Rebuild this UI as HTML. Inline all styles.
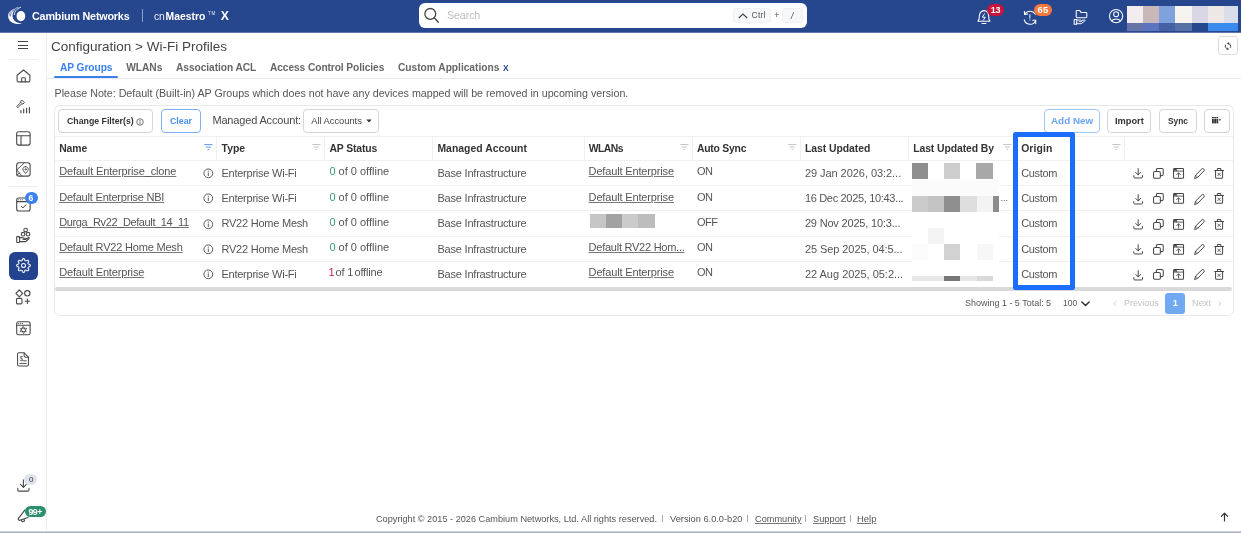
<!DOCTYPE html>
<html>
<head>
<meta charset="utf-8">
<title>cnMaestro X</title>
<style>
*{box-sizing:border-box;margin:0;padding:0}
html,body{width:1241px;height:533px;overflow:hidden;background:#fff}
body{font-family:"Liberation Sans",sans-serif;color:#4a4a4a;position:relative;font-size:11px}
.a{position:absolute}
.t{position:absolute;white-space:nowrap}
svg{position:absolute;overflow:visible}
.btn{position:absolute;border:1px solid #d6d6d6;border-radius:4px;background:#fff}
.vl{position:absolute;width:1px;background:#ececec}
.hl{position:absolute;height:1px;background:#ececec}
u{text-decoration:underline;text-underline-offset:1.2px;text-decoration-thickness:.8px;text-decoration-color:#777}
#txt{position:absolute;left:0;top:0;width:1241px;height:533px;will-change:transform}

</style>
</head>
<body>

<div class="a" style="left:0;top:0;width:1241px;height:32px;background:#26468d"></div>
<div class="a" style="left:0;top:32px;width:1241px;height:1px;background:#5f77ab"></div>
<svg style="left:7px;top:6px" width="20" height="20" viewBox="0 0 20 20">
<ellipse cx="13.900" cy="10.100" rx="4.400" ry="5.100" fill="#fff"/>
<path d="M12.300 1.100C5 2.500 1 6 1.100 10c.1 4.500 4.400 8.300 9.900 8 1.500-.1 2.900-.5 3.900-1.100-1.900.3-4.400.1-6.400-1.400C6 13.700 5.200 11 5.600 8.200 6 5.200 8.400 2.600 12.300 1.100Z" fill="#fff"/>
<path d="M10.300 1.900C5.800 3.600 3.300 6.800 3.500 10.400" stroke="#26468d" stroke-width=".7" fill="none"/>
<path d="M8.300 2.100C4 4 2 7 2.200 10.300" stroke="#26468d" stroke-width=".5" fill="none"/>
<path d="M13.900 1.200C9.600 2.600 7.300 5.600 7.400 9" stroke="#fff" stroke-width=".9" fill="none"/>
</svg>
<div class="a" style="left:141.5px;top:9px;width:1.2px;height:13px;background:#8d9fc6"></div>
<div class="a" style="left:419px;top:3px;width:388px;height:25px;background:#fff;border-radius:6px"></div>
<svg style="left:423px;top:7px" width="17" height="17" viewBox="0 0 17 17" fill="none" stroke="#444" stroke-width="1.3" stroke-linecap="round"><circle cx="7.3" cy="6.9" r="5.4"/><path d="M11.300 10.800 15.300 15.300"/></svg>
<div class="a" style="left:733px;top:8px;width:38px;height:15px;background:#f7f8fc;border:1px solid #f0f1f6;border-radius:3px"></div>
<svg style="left:738px;top:13px" width="10" height="6" viewBox="0 0 10 6" fill="none" stroke="#444" stroke-width="1.1"><path d="M.8 5 5 1 9.200 5"/></svg>
<div class="a" style="left:782px;top:8px;width:21px;height:15px;background:#f7f8fc;border:1px solid #f0f1f6;border-radius:3px"></div>
<svg style="left:976px;top:9px" width="16" height="17" viewBox="0 0 16 17" fill="none" stroke="#fff" stroke-width="1.05" stroke-linecap="round" stroke-linejoin="round">
<path d="M2 12.200C3.100 11.100 3.300 9.800 3.300 7.600 3.300 4.300 5 1.600 8 1.600S12.700 4.300 12.700 7.600c0 2.200.2 3.500 1.300 4.600Z"/>
<path d="M6 14.400h4"/>
<path d="M8.600 4.700 6.300 8.200h3L7.300 11.200" stroke-width=".95"/>
</svg>
<div class="a" style="left:987px;top:4px;width:17px;height:12px;border-radius:6px;background:#c8133d"></div>
<svg style="left:1023px;top:9px" width="15" height="17" viewBox="0 0 15 17" fill="none" stroke="#fff" stroke-width="1.050" stroke-linecap="round" stroke-linejoin="round">
<path d="M1.700 5.500A6 6 0 0 1 12.200 5.300"/><path d="M1.300 2.300 1.700 5.500 4.700 5.100"/>
<path d="M1.200 10.700A6 6 0 0 0 12.700 11.300"/><path d="M9.700 11.300h3v3.300"/>
<path d="M6.900 5.700v3.500M6.900 10.900v.2" stroke-width="1"/>
</svg>
<div class="a" style="left:1034px;top:4px;width:18px;height:12px;border-radius:6px;background:#f5773c"></div>
<svg style="left:1073px;top:9px" width="15" height="17" viewBox="0 0 15 17" fill="none" stroke="#fff" stroke-width="1.050" stroke-linecap="round" stroke-linejoin="round">
<path d="M3.200 2.300c0-.5.400-.9.900-.9h2.500l1.400 2h4.900c.5 0 .9.400.9.900v3.500c0 .5-.4.900-.9.900H4.100c-.5 0-.9-.4-.9-.9Z"/>
<path d="M1.200 10.500h2.500v4.700H1.200z"/>
<path d="M3.700 11h3.200c.7 0 1 .3 1.500.600l2.900-.700c.8-.2 1.100.8.400 1.200L8 14.700H3.700" stroke-width=".95"/>
<path d="M6.200 12.600h2.200" stroke-width=".9"/>
</svg>
<svg style="left:1108px;top:8px" width="16" height="16" viewBox="0 0 16 16" fill="none" stroke="#fff" stroke-width="1.050">
<circle cx="8.100" cy="8.100" r="6.600"/><circle cx="8.100" cy="6.200" r="2.500"/><path d="M3.600 12.900C4.500 11.700 6.100 11 8.100 11s3.600.7 4.500 1.900"/>
</svg>
<div class="a" style="left:1127px;top:6px;width:16px;height:17px;background:#f3edf0"></div>
<div class="a" style="left:1143px;top:6px;width:16px;height:17px;background:#c9b8ba"></div>
<div class="a" style="left:1159px;top:6px;width:16px;height:17px;background:#7fa2dd"></div>
<div class="a" style="left:1175px;top:6px;width:17px;height:17px;background:#f6f4ef"></div>
<div class="a" style="left:1192px;top:6px;width:16px;height:17px;background:#d9d6e6"></div>
<div class="a" style="left:1208px;top:6px;width:16px;height:17px;background:#eee8e4"></div>
<div class="a" style="left:1224px;top:6px;width:14px;height:17px;background:#d8deea"></div>
<div class="a" style="left:1127px;top:23px;width:16px;height:8px;background:#6673a7"></div>
<div class="a" style="left:1143px;top:23px;width:16px;height:8px;background:#5c74c0"></div>
<div class="a" style="left:1159px;top:23px;width:16px;height:8px;background:#4561a5"></div>
<div class="a" style="left:1175px;top:23px;width:17px;height:8px;background:#5670a5"></div>
<div class="a" style="left:1208px;top:23px;width:30px;height:8px;background:#3b8bec"></div>
<div class="a" style="left:46px;top:33px;width:1px;height:500px;background:#eeeeee"></div>
<div class="a" style="left:18px;top:41px;width:10px;height:1px;background:#444"></div>
<div class="a" style="left:18px;top:44.600px;width:10px;height:1px;background:#444"></div>
<div class="a" style="left:18px;top:48.400px;width:10px;height:1px;background:#444"></div>
<div class="a" style="left:9px;top:59px;width:29px;height:1px;background:#efefef"></div>
<svg style="left:16px;top:69px" width="15" height="14" viewBox="0 0 15 14" fill="none" stroke="#484848" stroke-width="1.1" stroke-linecap="round" stroke-linejoin="round">
<path d="M1.100 6.200 7.500 1l6.400 5.200v5.300c0 .8-.6 1.400-1.400 1.400H2.500c-.8 0-1.400-.6-1.400-1.400Z"/>
<path d="M5.700 12.800V9.600c0-.5.4-.9.900-.9h1.800c.5 0 .9.400.9.900v3.200"/></svg>
<svg style="left:16px;top:99px" width="15" height="15" viewBox="0 0 15 15" fill="none" stroke="#484848" stroke-width="1.1" stroke-linecap="round" stroke-linejoin="round">
<path d="M1 7.300 4.500 3.800 4.300 2.500 5.800 1 8.400 3.600 6.900 5.100 5.600 4.900 2.100 8.400Z" stroke-width="1"/>
<path d="M5 3.300 6.100 4.400" stroke-width=".9"/>
<path d="M4.900 11.600v2.200M7.700 10v3.800M10.600 9.200v4.600M13.400 8.600v5.200" stroke-width="1.150"/></svg>
<svg style="left:16px;top:131px" width="15" height="15" viewBox="0 0 15 15" fill="none" stroke="#484848" stroke-width="1.1" stroke-linecap="round" stroke-linejoin="round">
<rect x=".7" y=".7" width="13.400" height="13.400" rx="2"/><path d="M.7 4.800h13.400M5 4.800v9.300"/></svg>
<svg style="left:16px;top:162px" width="15" height="15" viewBox="0 0 15 15" fill="none" stroke="#484848" stroke-width="1.1" stroke-linecap="round" stroke-linejoin="round">
<rect x=".7" y=".7" width="13.400" height="13.400" rx="2.400"/>
<path d="M1 7.800 8.300.9M1.300 8.300l4.500 5.600M1 12.800l2.600-1.700" stroke-width=".9"/>
<path d="M9.600 4.600c-1.500 0-2.700 1.100-2.700 2.600 0 1.800 2.700 4.100 2.700 4.100s2.700-2.300 2.700-4.100c0-1.500-1.200-2.600-2.700-2.600Z" fill="#fff" stroke-width=".95"/>
<circle cx="9.600" cy="7.300" r=".7" stroke-width=".8"/></svg>
<div class="a" style="left:9px;top:186px;width:29px;height:1px;background:#efefef"></div>
<svg style="left:16px;top:197px" width="15" height="15" viewBox="0 0 15 15" fill="none" stroke="#484848" stroke-width="1.1" stroke-linecap="round" stroke-linejoin="round">
<rect x=".7" y="1" width="13.400" height="13" rx="2"/><path d="M.7 4.600h13.400"/>
<path d="M2.600 2.800h.1M4.400 2.800h.1M6.200 2.800h.1" stroke-width="1"/>
<path d="M5.300 9.400 6.900 11 9.800 7.900" stroke-width="1"/></svg>
<div class="a" style="left:25px;top:191.500px;width:12.500px;height:12.500px;border-radius:50%;background:#3b82f0"></div>
<svg style="left:16px;top:227px" width="15" height="16" viewBox="0 0 15 16" fill="none" stroke="#484848" stroke-width="1.1" stroke-linecap="round" stroke-linejoin="round" stroke-width="1">
<circle cx="9.600" cy="3.100" r="1.800"/><circle cx="7.100" cy="7.200" r="1.800"/><circle cx="12" cy="7.200" r="1.800"/>
<rect x=".7" y="9.600" width="2.900" height="5.900" rx=".6"/>
<path d="M3.600 10.600h2.300c.9 0 1.400.3 2 .700h1.800c.8 0 .8 1.200 0 1.200H7.100M10 12.200l2.300-1.400c.8-.4 1.300.6.600 1.100L10 14.200c-.4.300-.8.400-1.300.4H3.600"/></svg>
<div class="a" style="left:9px;top:251.500px;width:28.500px;height:28.500px;border-radius:6px;background:#24438f"></div>
<svg style="left:16px;top:258px" width="15" height="15" viewBox="0 0 24 24" fill="none" stroke="#fff" stroke-width="1.700" stroke-linecap="round" stroke-linejoin="round">
<circle cx="12" cy="12" r="3.200"/>
<path d="M19.400 15a1.650 1.650 0 0 0 .33 1.820l.06.06a2 2 0 1 1-2.830 2.830l-.06-.06a1.650 1.650 0 0 0-1.820-.33 1.650 1.650 0 0 0-1 1.510V21a2 2 0 0 1-4 0v-.09A1.650 1.650 0 0 0 9 19.400a1.650 1.650 0 0 0-1.820.33l-.06.06a2 2 0 1 1-2.830-2.830l.06-.06a1.650 1.650 0 0 0 .33-1.820 1.650 1.650 0 0 0-1.510-1H3a2 2 0 0 1 0-4h.09A1.650 1.650 0 0 0 4.600 9a1.650 1.650 0 0 0-.33-1.820l-.06-.06a2 2 0 1 1 2.830-2.830l.06.06a1.650 1.650 0 0 0 1.820.33H9a1.650 1.650 0 0 0 1-1.510V3a2 2 0 0 1 4 0v.09a1.650 1.650 0 0 0 1 1.510 1.650 1.650 0 0 0 1.820-.33l.06-.06a2 2 0 1 1 2.830 2.830l-.06.06a1.650 1.650 0 0 0-.33 1.820V9a1.650 1.650 0 0 0 1.510 1H21a2 2 0 0 1 0 4h-.09a1.650 1.650 0 0 0-1.510 1z"/></svg>
<svg style="left:15px;top:289px" width="16" height="16" viewBox="0 0 16 16" fill="none" stroke="#484848" stroke-width="1.1" stroke-linecap="round" stroke-linejoin="round" stroke-width="1">
<path d="M4.300 1 7.700 4.400 4.300 7.800.9 4.400Z"/><circle cx="12.300" cy="4.300" r="2.700"/>
<rect x="1.500" y="9.400" width="5.500" height="5.500" rx="1.200"/>
<path d="M12.400 10v4.400M10.200 12.200h4.400" stroke-width="1.100"/></svg>
<svg style="left:16px;top:321px" width="15" height="15" viewBox="0 0 15 15" fill="none" stroke="#484848" stroke-width="1.1" stroke-linecap="round" stroke-linejoin="round">
<rect x=".7" y=".8" width="13.400" height="13" rx="1.800"/><path d="M.7 4.200h13.400"/>
<path d="M2.600 2.500h.1M4.500 2.500h.1M6.400 2.500h.1" stroke-width="1.100"/>
<path d="M7.400 5.600 10.300 10.600H4.500ZM7.400 12.300 4.500 7.300h5.800Z" stroke-width=".8"/></svg>
<svg style="left:16.400px;top:351.800px" width="14.200" height="15" viewBox="0 0 15 16" fill="none" stroke="#484848" stroke-width="1.1" stroke-linecap="round" stroke-linejoin="round">
<path d="M8.600.9H3c-.8 0-1.400.6-1.400 1.400v11.200c0 .8.600 1.400 1.400 1.400h8.800c.8 0 1.400-.6 1.400-1.400V5.500Z"/>
<path d="M8.600.9v3.200c0 .8.600 1.400 1.400 1.400h3.200"/>
<path d="M7.900 9.400h3M4 12.200h6.900" stroke-width="1"/></svg>
<svg style="left:17px;top:479px" width="13" height="13" viewBox="0 0 13 13" fill="none" stroke="#484848" stroke-width="1.1" stroke-linecap="round" stroke-linejoin="round">
<path d="M6.400.700v7.400M3.500 5.400l2.900 2.900 2.900-2.900M.8 9.400v1.500c0 .7.500 1.200 1.200 1.200h8.800c.7 0 1.200-.5 1.200-1.200V9.400"/></svg>
<div class="a" style="left:24.400px;top:474px;width:13.100px;height:10.800px;border-radius:5.400px;background:#dfe4ec"></div>
<svg style="left:17px;top:509px" width="14" height="15" viewBox="0 0 14 15" fill="none" stroke="#484848" stroke-width="1.1" stroke-linecap="round" stroke-linejoin="round" stroke-width=".9">
<path d="M8 .900 1 9.900l1.300 1.500L11 8.600"/><path d="M4.300 10.900l.9 1.900 2.400-.9-.6-1.700"/></svg>
<div class="a" style="left:24.600px;top:506px;width:21.500px;height:11px;border-radius:5.500px;background:#2b8f6b"></div>
<div class="a" style="left:0;top:531px;width:1241px;height:1px;background:#cfd4db"></div>
<div class="a" style="left:0;top:532px;width:1241px;height:1px;background:#aab2bd"></div>
<div class="btn" style="left:1218px;top:36px;width:20px;height:19px;border-color:#dcdcdc;border-radius:3px"></div>
<svg style="left:1223.600px;top:41.800px" width="8" height="8.400" viewBox="0 0 10 10.500" fill="none" stroke="#333" stroke-width="1.150" stroke-linecap="round" stroke-linejoin="round">
<path d="M5.400 1.750A3.500 3.500 0 0 1 8.200 6.700M4.600 8.750A3.500 3.500 0 0 1 1.800 3.800"/><path d="M5.700.5 4.100 1.750 5.700 3ZM4.300 7.500 5.900 8.750 4.300 10Z" fill="#333" stroke-width=".4"/></svg>
<div class="a" style="left:47px;top:78px;width:1194px;height:1px;background:#e9e9e9"></div>
<div class="a" style="left:54px;top:76px;width:64px;height:2.200px;border-radius:1.500px;background:#3b82f0"></div>
<div class="a" style="left:54px;top:105px;width:1180px;height:211px;border:1px solid #e9e9e9;border-radius:6px"></div>
<div class="btn" style="left:58px;top:109px;width:95px;height:23.500px;border-color:#d6d6d6"></div>
<svg style="left:136.200px;top:118.200px" width="8.400" height="8.400" viewBox="0 0 9 9" fill="none" stroke="#444" stroke-width=".8"><circle cx="4.300" cy="4.300" r="3.500"/><path d="M4.300 3.900v2.300M4.300 2.500v.3" stroke-linecap="round"/></svg>
<div class="btn" style="left:161px;top:109px;width:39.500px;height:23.500px;border-color:#7fb0f6"></div>
<div class="btn" style="left:302.500px;top:109px;width:76px;height:23.500px;border-color:#d6d6d6"></div>
<svg style="left:365.500px;top:119px" width="6" height="4" viewBox="0 0 6 4"><path d="M.3.400h5.400L3 3.600Z" fill="#333"/></svg>
<div class="btn" style="left:1044px;top:109px;width:55.500px;height:23.500px;border-color:#a4c6f9"></div>
<div class="btn" style="left:1107px;top:109px;width:43.500px;height:23.500px;border-color:#d6d6d6"></div>
<div class="btn" style="left:1159px;top:109px;width:37.500px;height:23.500px;border-color:#d6d6d6"></div>
<div class="btn" style="left:1203.500px;top:109px;width:26px;height:23.500px;border-color:#d6d6d6"></div>
<svg style="left:1212px;top:117px" width="9.200" height="6.500" viewBox="0 0 9.200 6.500" fill="#333"><rect x="0" y="0" width="1.800" height="1.300"/><rect x="2.200" y="0" width="1.800" height="1.300"/><rect x="4.400" y="0" width="1.800" height="1.300"/>
<rect x="0" y="1.900" width="1.800" height="4.500"/><rect x="2.200" y="1.900" width="1.800" height="4.500"/><rect x="4.400" y="1.900" width="1.800" height="4.500"/><path d="M6.700 2.300h2.500L7.950 4.100Z"/></svg>
<div class="hl" style="left:55px;top:136px;width:1178px;background:#f0f0f0"></div>
<div class="hl" style="left:55px;top:160px;width:1178px;background:#f0f0f0"></div>
<div class="hl" style="left:55px;top:185px;width:1178px;background:#f0f0f0"></div>
<div class="hl" style="left:55px;top:210px;width:1178px;background:#f0f0f0"></div>
<div class="hl" style="left:55px;top:236px;width:1178px;background:#f0f0f0"></div>
<div class="hl" style="left:55px;top:261px;width:1178px;background:#f0f0f0"></div>
<div class="vl" style="left:216px;top:137px;height:23px;background:#f0f0f0"></div>
<div class="vl" style="left:324px;top:137px;height:23px;background:#f0f0f0"></div>
<div class="vl" style="left:432px;top:137px;height:23px;background:#f0f0f0"></div>
<div class="vl" style="left:584px;top:137px;height:23px;background:#f0f0f0"></div>
<div class="vl" style="left:692px;top:137px;height:23px;background:#f0f0f0"></div>
<div class="vl" style="left:800px;top:137px;height:23px;background:#f0f0f0"></div>
<div class="vl" style="left:908px;top:137px;height:23px;background:#f0f0f0"></div>
<div class="vl" style="left:1016px;top:137px;height:23px;background:#f0f0f0"></div>
<div class="vl" style="left:1124px;top:137px;height:23px;background:#f0f0f0"></div>
<svg style="left:203.5px;top:144px" width="9" height="6" viewBox="0 0 9 6" stroke="#5b9af5" stroke-width="1" fill="none"><path d="M.2.600h8.300M1.900 3.100h4.900M3.500 5.400h1.700"/></svg>
<svg style="left:312px;top:144px" width="9" height="6" viewBox="0 0 9 6" stroke="#c4c4c4" stroke-width="1" fill="none"><path d="M.2.600h8.300M1.900 3.100h4.900M3.500 5.400h1.700"/></svg>
<svg style="left:679.5px;top:144px" width="9" height="6" viewBox="0 0 9 6" stroke="#c4c4c4" stroke-width="1" fill="none"><path d="M.2.600h8.300M1.900 3.100h4.900M3.500 5.400h1.700"/></svg>
<svg style="left:787.5px;top:144px" width="9" height="6" viewBox="0 0 9 6" stroke="#c4c4c4" stroke-width="1" fill="none"><path d="M.2.600h8.300M1.900 3.100h4.900M3.500 5.400h1.700"/></svg>
<svg style="left:1003.3px;top:144px" width="9" height="6" viewBox="0 0 9 6" stroke="#c4c4c4" stroke-width="1" fill="none"><path d="M.2.600h8.300M1.900 3.100h4.900M3.500 5.400h1.700"/></svg>
<svg style="left:1111.8px;top:144px" width="9" height="6" viewBox="0 0 9 6" stroke="#c4c4c4" stroke-width="1" fill="none"><path d="M.2.600h8.300M1.900 3.100h4.900M3.500 5.400h1.700"/></svg>
<svg style="left:202.700px;top:167.9px" width="11" height="11" viewBox="0 0 11 11" fill="none" stroke="#4a4a4a" stroke-width=".9"><circle cx="5.300" cy="5.300" r="4.400"/><path d="M5.300 4.900v2.700M5.300 3v.3" stroke-linecap="round"/></svg>
<svg style="left:1133.400px;top:168.3px" width="10.900" height="10.900" viewBox="0 0 12 12" fill="none" stroke="#444" stroke-width="1.080" stroke-linecap="round" stroke-linejoin="round"><path d="M5.700.700v6.800M3 4.900l2.700 2.700 2.700-2.700M.9 8.400v1.500c0 .6.500 1.100 1.100 1.100h7.400c.6 0 1.100-.5 1.100-1.100V8.400"/></svg>
<svg style="left:1152.700px;top:168.1px" width="11.300" height="11.300" viewBox="0 0 12 12" fill="none" stroke="#444" stroke-width="1.080" stroke-linecap="round" stroke-linejoin="round"><rect x=".6" y="3.600" width="7.200" height="7.400" rx="1.500"/><path d="M3.600 3.400V2c0-.8.600-1.400 1.400-1.400h4.500c.8 0 1.400.6 1.400 1.400v4.700c0 .8-.6 1.400-1.400 1.400H8"/></svg>
<svg style="left:1172.700px;top:168.1px" width="11.300" height="11.300" viewBox="0 0 12 12" fill="none" stroke="#444" stroke-width="1.080" stroke-linecap="round" stroke-linejoin="round"><rect x=".6" y=".6" width="10.600" height="10.400" rx="1"/><path d="M.6 3.300h10.600M3.900.8v2.300" stroke-width=".9"/><path d="M5.900 9.600V5.300M3.900 7.100l2-2 2 2" stroke-width=".95"/><path d="M1.100 1.900h2.400" stroke-width="1.700" stroke-linecap="butt"/></svg>
<svg style="left:1193.500px;top:168.2px" width="11.100" height="11.100" viewBox="0 0 12 12" fill="none" stroke="#444" stroke-width="1.080" stroke-linecap="round" stroke-linejoin="round"><path d="M.8 11l.9-3.300L8.600.9c.5-.5 1.200-.5 1.700 0l.5.500c.5.500.5 1.200 0 1.700L4 10Z"/><path d="M1.700 7.700 4 10" stroke-width=".8"/></svg>
<svg style="left:1214.400px;top:168.0px" width="10.200" height="11.200" viewBox="0 0 11 12" fill="none" stroke="#444" stroke-width="1.080" stroke-linecap="round" stroke-linejoin="round"><path d="M.7 2.600h9.600M3.600 2.400V1.300c0-.4.300-.7.700-.7h2.400c.4 0 .7.300.7.700v1.100M1.700 2.800v7.200c0 .6.500 1.100 1.100 1.100h5.400c.6 0 1.100-.5 1.100-1.100V2.800"/><path d="M4.100 5.400l2.800 2.800M6.900 5.400 4.100 8.200" stroke-width=".9"/></svg>
<svg style="left:202.700px;top:193.2px" width="11" height="11" viewBox="0 0 11 11" fill="none" stroke="#4a4a4a" stroke-width=".9"><circle cx="5.300" cy="5.300" r="4.400"/><path d="M5.300 4.900v2.700M5.300 3v.3" stroke-linecap="round"/></svg>
<svg style="left:1133.400px;top:193.6px" width="10.900" height="10.900" viewBox="0 0 12 12" fill="none" stroke="#444" stroke-width="1.080" stroke-linecap="round" stroke-linejoin="round"><path d="M5.700.700v6.800M3 4.900l2.700 2.700 2.700-2.700M.9 8.400v1.500c0 .6.500 1.100 1.100 1.100h7.400c.6 0 1.100-.5 1.100-1.100V8.400"/></svg>
<svg style="left:1152.700px;top:193.4px" width="11.300" height="11.300" viewBox="0 0 12 12" fill="none" stroke="#444" stroke-width="1.080" stroke-linecap="round" stroke-linejoin="round"><rect x=".6" y="3.600" width="7.200" height="7.400" rx="1.500"/><path d="M3.600 3.400V2c0-.8.600-1.400 1.400-1.400h4.500c.8 0 1.400.6 1.400 1.400v4.700c0 .8-.6 1.400-1.400 1.400H8"/></svg>
<svg style="left:1172.700px;top:193.4px" width="11.300" height="11.300" viewBox="0 0 12 12" fill="none" stroke="#444" stroke-width="1.080" stroke-linecap="round" stroke-linejoin="round"><rect x=".6" y=".6" width="10.600" height="10.400" rx="1"/><path d="M.6 3.300h10.600M3.900.8v2.300" stroke-width=".9"/><path d="M5.900 9.600V5.300M3.900 7.100l2-2 2 2" stroke-width=".95"/><path d="M1.100 1.900h2.400" stroke-width="1.700" stroke-linecap="butt"/></svg>
<svg style="left:1193.500px;top:193.5px" width="11.100" height="11.100" viewBox="0 0 12 12" fill="none" stroke="#444" stroke-width="1.080" stroke-linecap="round" stroke-linejoin="round"><path d="M.8 11l.9-3.300L8.600.9c.5-.5 1.200-.5 1.700 0l.5.500c.5.500.5 1.200 0 1.700L4 10Z"/><path d="M1.700 7.700 4 10" stroke-width=".8"/></svg>
<svg style="left:1214.400px;top:193.3px" width="10.200" height="11.200" viewBox="0 0 11 12" fill="none" stroke="#444" stroke-width="1.080" stroke-linecap="round" stroke-linejoin="round"><path d="M.7 2.600h9.600M3.600 2.400V1.300c0-.4.300-.7.700-.7h2.400c.4 0 .7.300.7.700v1.100M1.700 2.800v7.200c0 .6.500 1.100 1.100 1.100h5.400c.6 0 1.100-.5 1.100-1.100V2.800"/><path d="M4.100 5.400l2.800 2.800M6.900 5.400 4.100 8.200" stroke-width=".9"/></svg>
<svg style="left:202.700px;top:218.5px" width="11" height="11" viewBox="0 0 11 11" fill="none" stroke="#4a4a4a" stroke-width=".9"><circle cx="5.300" cy="5.300" r="4.400"/><path d="M5.300 4.900v2.700M5.300 3v.3" stroke-linecap="round"/></svg>
<svg style="left:1133.400px;top:218.9px" width="10.900" height="10.900" viewBox="0 0 12 12" fill="none" stroke="#444" stroke-width="1.080" stroke-linecap="round" stroke-linejoin="round"><path d="M5.700.700v6.800M3 4.900l2.700 2.700 2.700-2.700M.9 8.400v1.500c0 .6.500 1.100 1.100 1.100h7.400c.6 0 1.100-.5 1.100-1.100V8.400"/></svg>
<svg style="left:1152.700px;top:218.7px" width="11.300" height="11.300" viewBox="0 0 12 12" fill="none" stroke="#444" stroke-width="1.080" stroke-linecap="round" stroke-linejoin="round"><rect x=".6" y="3.600" width="7.200" height="7.400" rx="1.500"/><path d="M3.600 3.400V2c0-.8.600-1.400 1.400-1.400h4.500c.8 0 1.400.6 1.400 1.400v4.700c0 .8-.6 1.400-1.400 1.400H8"/></svg>
<svg style="left:1172.700px;top:218.7px" width="11.300" height="11.300" viewBox="0 0 12 12" fill="none" stroke="#444" stroke-width="1.080" stroke-linecap="round" stroke-linejoin="round"><rect x=".6" y=".6" width="10.600" height="10.400" rx="1"/><path d="M.6 3.300h10.600M3.900.8v2.300" stroke-width=".9"/><path d="M5.900 9.600V5.300M3.900 7.100l2-2 2 2" stroke-width=".95"/><path d="M1.100 1.900h2.400" stroke-width="1.700" stroke-linecap="butt"/></svg>
<svg style="left:1193.500px;top:218.8px" width="11.100" height="11.100" viewBox="0 0 12 12" fill="none" stroke="#444" stroke-width="1.080" stroke-linecap="round" stroke-linejoin="round"><path d="M.8 11l.9-3.300L8.600.9c.5-.5 1.200-.5 1.700 0l.5.500c.5.500.5 1.200 0 1.700L4 10Z"/><path d="M1.700 7.700 4 10" stroke-width=".8"/></svg>
<svg style="left:1214.400px;top:218.6px" width="10.200" height="11.200" viewBox="0 0 11 12" fill="none" stroke="#444" stroke-width="1.080" stroke-linecap="round" stroke-linejoin="round"><path d="M.7 2.600h9.600M3.600 2.400V1.300c0-.4.300-.7.700-.7h2.400c.4 0 .7.300.7.700v1.100M1.700 2.800v7.200c0 .6.500 1.100 1.100 1.100h5.400c.6 0 1.100-.5 1.100-1.100V2.800"/><path d="M4.100 5.400l2.800 2.800M6.900 5.400 4.100 8.200" stroke-width=".9"/></svg>
<svg style="left:202.700px;top:243.8px" width="11" height="11" viewBox="0 0 11 11" fill="none" stroke="#4a4a4a" stroke-width=".9"><circle cx="5.300" cy="5.300" r="4.400"/><path d="M5.300 4.900v2.700M5.300 3v.3" stroke-linecap="round"/></svg>
<svg style="left:1133.400px;top:244.2px" width="10.900" height="10.900" viewBox="0 0 12 12" fill="none" stroke="#444" stroke-width="1.080" stroke-linecap="round" stroke-linejoin="round"><path d="M5.700.700v6.800M3 4.900l2.700 2.700 2.700-2.700M.9 8.400v1.500c0 .6.500 1.100 1.100 1.100h7.400c.6 0 1.100-.5 1.100-1.100V8.400"/></svg>
<svg style="left:1152.700px;top:244.0px" width="11.300" height="11.300" viewBox="0 0 12 12" fill="none" stroke="#444" stroke-width="1.080" stroke-linecap="round" stroke-linejoin="round"><rect x=".6" y="3.600" width="7.200" height="7.400" rx="1.500"/><path d="M3.600 3.400V2c0-.8.600-1.400 1.400-1.400h4.500c.8 0 1.400.6 1.400 1.400v4.700c0 .8-.6 1.400-1.400 1.400H8"/></svg>
<svg style="left:1172.700px;top:244.0px" width="11.300" height="11.300" viewBox="0 0 12 12" fill="none" stroke="#444" stroke-width="1.080" stroke-linecap="round" stroke-linejoin="round"><rect x=".6" y=".6" width="10.600" height="10.400" rx="1"/><path d="M.6 3.300h10.600M3.900.8v2.300" stroke-width=".9"/><path d="M5.900 9.600V5.300M3.900 7.100l2-2 2 2" stroke-width=".95"/><path d="M1.100 1.900h2.400" stroke-width="1.700" stroke-linecap="butt"/></svg>
<svg style="left:1193.500px;top:244.1px" width="11.100" height="11.100" viewBox="0 0 12 12" fill="none" stroke="#444" stroke-width="1.080" stroke-linecap="round" stroke-linejoin="round"><path d="M.8 11l.9-3.300L8.600.9c.5-.5 1.200-.5 1.700 0l.5.500c.5.500.5 1.200 0 1.700L4 10Z"/><path d="M1.700 7.700 4 10" stroke-width=".8"/></svg>
<svg style="left:1214.400px;top:243.9px" width="10.200" height="11.200" viewBox="0 0 11 12" fill="none" stroke="#444" stroke-width="1.080" stroke-linecap="round" stroke-linejoin="round"><path d="M.7 2.600h9.600M3.600 2.400V1.300c0-.4.300-.7.700-.7h2.400c.4 0 .7.300.7.700v1.100M1.700 2.800v7.200c0 .6.500 1.100 1.100 1.100h5.400c.6 0 1.100-.5 1.100-1.100V2.800"/><path d="M4.100 5.400l2.800 2.800M6.900 5.400 4.100 8.200" stroke-width=".9"/></svg>
<svg style="left:202.700px;top:269.1px" width="11" height="11" viewBox="0 0 11 11" fill="none" stroke="#4a4a4a" stroke-width=".9"><circle cx="5.300" cy="5.300" r="4.400"/><path d="M5.300 4.900v2.700M5.300 3v.3" stroke-linecap="round"/></svg>
<svg style="left:1133.400px;top:269.5px" width="10.900" height="10.900" viewBox="0 0 12 12" fill="none" stroke="#444" stroke-width="1.080" stroke-linecap="round" stroke-linejoin="round"><path d="M5.700.700v6.800M3 4.900l2.700 2.700 2.700-2.700M.9 8.400v1.500c0 .6.500 1.100 1.100 1.100h7.400c.6 0 1.100-.5 1.100-1.100V8.400"/></svg>
<svg style="left:1152.700px;top:269.3px" width="11.300" height="11.300" viewBox="0 0 12 12" fill="none" stroke="#444" stroke-width="1.080" stroke-linecap="round" stroke-linejoin="round"><rect x=".6" y="3.600" width="7.200" height="7.400" rx="1.500"/><path d="M3.600 3.400V2c0-.8.600-1.400 1.400-1.400h4.500c.8 0 1.400.6 1.400 1.400v4.700c0 .8-.6 1.400-1.400 1.400H8"/></svg>
<svg style="left:1172.700px;top:269.3px" width="11.300" height="11.300" viewBox="0 0 12 12" fill="none" stroke="#444" stroke-width="1.080" stroke-linecap="round" stroke-linejoin="round"><rect x=".6" y=".6" width="10.600" height="10.400" rx="1"/><path d="M.6 3.300h10.600M3.900.8v2.300" stroke-width=".9"/><path d="M5.900 9.600V5.300M3.900 7.100l2-2 2 2" stroke-width=".95"/><path d="M1.100 1.900h2.400" stroke-width="1.700" stroke-linecap="butt"/></svg>
<svg style="left:1193.500px;top:269.4px" width="11.100" height="11.100" viewBox="0 0 12 12" fill="none" stroke="#444" stroke-width="1.080" stroke-linecap="round" stroke-linejoin="round"><path d="M.8 11l.9-3.300L8.600.9c.5-.5 1.200-.5 1.700 0l.5.500c.5.500.5 1.200 0 1.700L4 10Z"/><path d="M1.700 7.700 4 10" stroke-width=".8"/></svg>
<svg style="left:1214.400px;top:269.2px" width="10.200" height="11.200" viewBox="0 0 11 12" fill="none" stroke="#444" stroke-width="1.080" stroke-linecap="round" stroke-linejoin="round"><path d="M.7 2.600h9.600M3.600 2.400V1.300c0-.4.300-.7.700-.7h2.400c.4 0 .7.300.7.700v1.100M1.700 2.800v7.200c0 .6.500 1.100 1.100 1.100h5.400c.6 0 1.100-.5 1.100-1.100V2.800"/><path d="M4.100 5.400l2.800 2.800M6.900 5.400 4.100 8.200" stroke-width=".9"/></svg>
<div class="a" style="left:590px;top:214px;width:16px;height:14px;background:#c6c6c6"></div>
<div class="a" style="left:606px;top:214px;width:16px;height:14px;background:#a2a2a2"></div>
<div class="a" style="left:622px;top:214px;width:16px;height:14px;background:#cbcbcb"></div>
<div class="a" style="left:638px;top:214px;width:17px;height:14px;background:#bdbdbd"></div>
<div class="a" style="left:912px;top:179.500px;width:87px;height:102px;background:#fff"></div>
<div class="a" style="left:912px;top:179.500px;width:87px;height:16px;background:#fbfbfb"></div>
<div class="a" style="left:912px;top:163.4px;width:16.0px;height:16.1px;background:#8f8f8f"></div>
<div class="a" style="left:944px;top:163.4px;width:16.2px;height:16.1px;background:#cdcdcd"></div>
<div class="a" style="left:976.4px;top:163.4px;width:16.3px;height:16.1px;background:#a8a8a8"></div>
<div class="a" style="left:912px;top:195.8px;width:16.0px;height:15.9px;background:#cbcbcb"></div>
<div class="a" style="left:928px;top:195.8px;width:16.0px;height:15.9px;background:#c4c4c4"></div>
<div class="a" style="left:944px;top:195.8px;width:16.3px;height:15.9px;background:#8f8f8f"></div>
<div class="a" style="left:960.3px;top:195.8px;width:16.3px;height:15.9px;background:#dedede"></div>
<div class="a" style="left:976.6px;top:195.8px;width:16.1px;height:15.9px;background:#f3f3f3"></div>
<div class="a" style="left:992.7px;top:195.8px;width:6.1px;height:15.9px;background:#8c8c8c"></div>
<div class="a" style="left:928px;top:227.8px;width:16.0px;height:15.9px;background:#f4f4f4"></div>
<div class="a" style="left:912px;top:243.7px;width:16.0px;height:16.5px;background:#fcfcfc"></div>
<div class="a" style="left:944px;top:243.7px;width:16.3px;height:16.5px;background:#d2d2d2"></div>
<div class="a" style="left:976.6px;top:243.7px;width:16.1px;height:16.5px;background:#f7f7f7"></div>
<div class="a" style="left:912px;top:276.3px;width:32.0px;height:4.7px;background:#e8e8e8"></div>
<div class="a" style="left:944px;top:276.3px;width:16.3px;height:4.7px;background:#777"></div>
<div class="a" style="left:960.3px;top:276.3px;width:16.3px;height:4.7px;background:#e6e6e6"></div>
<div class="a" style="left:976.6px;top:276.3px;width:16.1px;height:4.7px;background:#d9d9d9"></div>
<div class="a" style="left:55px;top:287px;width:1177px;height:4px;background:#d9d9d9;border-radius:2px"></div>
<div class="a" style="left:1013px;top:132px;width:62.300px;height:158px;border:5px solid #1a6efb;border-radius:2.500px"></div>
<svg style="left:1081px;top:300.500px" width="9" height="6" viewBox="0 0 9 6" fill="none" stroke="#333" stroke-width="1.500" stroke-linecap="round" stroke-linejoin="round"><path d="M.9 1 4.500 4.500 8.100 1"/></svg>
<svg style="left:1113px;top:300.700px" width="4" height="6" viewBox="0 0 4 6" fill="none" stroke="#c4c4c4" stroke-width=".9"><path d="M2.900.7.900 2.800 2.900 4.900"/></svg>
<div class="a" style="left:1165.300px;top:293px;width:19.700px;height:20.500px;border-radius:3px;background:#70a9f1"></div>
<svg style="left:1217.800px;top:300.700px" width="4" height="6" viewBox="0 0 4 6" fill="none" stroke="#c4c4c4" stroke-width=".9"><path d="M.7.700 2.700 2.800.7 4.900"/></svg>
<div class="a" style="left:662.0px;top:514.500px;width:1px;height:7px;background:#a8a8a8"></div>
<div class="a" style="left:747.2px;top:514.500px;width:1px;height:7px;background:#a8a8a8"></div>
<div class="a" style="left:805.1px;top:514.500px;width:1px;height:7px;background:#a8a8a8"></div>
<div class="a" style="left:849.9px;top:514.500px;width:1px;height:7px;background:#a8a8a8"></div>
<svg style="left:1220px;top:512px" width="9" height="10" viewBox="0 0 9 10" fill="none" stroke="#333" stroke-width="1.200" stroke-linecap="round" stroke-linejoin="round"><path d="M4.500 9V1.200M1.300 4.300 4.500 1.100l3.200 3.200"/></svg>
<div id="txt">
<div class="t" style="left:32px;top:9px;font-size:10.8px;line-height:15px;color:#fff;font-weight:bold;letter-spacing:-0.21px;">Cambium Networks</div>
<div class="t" style="left:154px;top:9px;font-size:10.4px;line-height:15px;color:#e8ecf5;letter-spacing:-0.09px;">cn</div>
<div class="t" style="left:165.5px;top:9px;font-size:10.4px;line-height:15px;color:#fff;font-weight:bold;letter-spacing:-0.01px;">Maestro</div>
<div class="t" style="left:208px;top:11px;font-size:4.6px;line-height:6px;color:#e8ecf5;letter-spacing:0.60px;">TM</div>
<div class="t" style="left:220.8px;top:8px;font-size:12.2px;line-height:17px;color:#fff;font-weight:bold;">X</div>
<div class="t" style="left:447px;top:8px;font-size:10.8px;line-height:15px;color:#bdbdbd;letter-spacing:-0.17px;">Search</div>
<div class="t" style="left:751.6px;top:9px;font-size:8.6px;line-height:12px;color:#555;letter-spacing:0.16px;">Ctrl</div>
<div class="t" style="left:774px;top:8px;font-size:9.5px;line-height:13px;color:#555;">+</div>
<div class="t" style="left:791px;top:10px;font-size:8.6px;line-height:12px;color:#444;font-style:italic;">/</div>
<div class="t" style="left:990.8px;top:4px;font-size:9px;line-height:13px;color:#fff;font-weight:bold;letter-spacing:-0.41px;">13</div>
<div class="t" style="left:1037.4px;top:3px;font-size:9.4px;line-height:13px;color:#fff;font-weight:bold;letter-spacing:0.38px;">65</div>
<div class="t" style="left:28.6px;top:192px;font-size:8.6px;line-height:12px;color:#fff;font-weight:bold;">6</div>
<div class="t" style="left:19.5px;top:354px;font-size:6.6px;line-height:9px;color:#444;">$</div>
<div class="t" style="left:28.9px;top:474px;font-size:8px;line-height:11px;color:#333;">0</div>
<div class="t" style="left:28.4px;top:506px;font-size:8.8px;line-height:12px;color:#fff;font-weight:bold;letter-spacing:-0.45px;">99+</div>
<div class="t" style="left:51px;top:37px;font-size:13.5px;line-height:19px;color:#444;">Configuration &gt; Wi-Fi Profiles</div>
<div class="t" style="left:60px;top:61px;font-size:10.2px;line-height:14px;color:#3b82f0;font-weight:bold;letter-spacing:-0.07px;">AP Groups</div>
<div class="t" style="left:126.3px;top:61px;font-size:10.2px;line-height:14px;color:#666;font-weight:bold;letter-spacing:-0.04px;">WLANs</div>
<div class="t" style="left:176px;top:61px;font-size:10.2px;line-height:14px;color:#666;font-weight:bold;letter-spacing:-0.06px;">Association ACL</div>
<div class="t" style="left:270px;top:61px;font-size:10.2px;line-height:14px;color:#666;font-weight:bold;letter-spacing:-0.08px;">Access Control Policies</div>
<div class="t" style="left:398px;top:61px;font-size:10.2px;line-height:14px;color:#666;font-weight:bold;letter-spacing:-0.01px;">Custom Applications</div>
<div class="t" style="left:502.9px;top:61px;font-size:9.8px;line-height:14px;color:#1f3f8a;font-weight:bold;transform:scaleX(0.855);transform-origin:0 50%;">X</div>
<div class="t" style="left:54.6px;top:86px;font-size:10.7px;line-height:15px;color:#555;letter-spacing:-0.01px;">Please Note: Default (Built-in) AP Groups which does not have any devices mapped will be removed in upcoming version.</div>
<div class="t" style="left:66.7px;top:114px;font-size:9.6px;line-height:13px;color:#333;font-weight:bold;transform:scaleX(0.913);transform-origin:0 50%;">Change Filter(s)</div>
<div class="t" style="left:169.8px;top:114px;font-size:9.6px;line-height:13px;color:#4a8df2;font-weight:bold;transform:scaleX(0.917);transform-origin:0 50%;">Clear</div>
<div class="t" style="left:212.4px;top:113px;font-size:11px;line-height:15px;color:#4a4a4a;letter-spacing:-0.16px;">Managed Account:</div>
<div class="t" style="left:311.2px;top:115px;font-size:9.3px;line-height:13px;color:#444;">All Accounts</div>
<div class="t" style="left:1051.4px;top:114px;font-size:9.6px;line-height:13px;color:#6aa3f5;font-weight:bold;transform:scaleX(1.028);transform-origin:0 50%;">Add New</div>
<div class="t" style="left:1114.6px;top:114px;font-size:9.6px;line-height:13px;color:#333;font-weight:bold;transform:scaleX(0.965);transform-origin:0 50%;">Import</div>
<div class="t" style="left:1167.6px;top:114px;font-size:9.6px;line-height:13px;color:#333;font-weight:bold;transform:scaleX(0.872);transform-origin:0 50%;">Sync</div>
<div class="t" style="left:59.2px;top:141px;font-size:10.4px;line-height:15px;color:#333;font-weight:bold;letter-spacing:-0.08px;">Name</div>
<div class="t" style="left:221.6px;top:141px;font-size:10.4px;line-height:15px;color:#333;font-weight:bold;letter-spacing:-0.02px;">Type</div>
<div class="t" style="left:329.4px;top:141px;font-size:10.4px;line-height:15px;color:#333;font-weight:bold;letter-spacing:-0.12px;">AP Status</div>
<div class="t" style="left:437.4px;top:141px;font-size:10.4px;line-height:15px;color:#333;font-weight:bold;letter-spacing:0.03px;">Managed Account</div>
<div class="t" style="left:588.8px;top:141px;font-size:10.4px;line-height:15px;color:#333;font-weight:bold;letter-spacing:-0.55px;">WLANs</div>
<div class="t" style="left:696.9px;top:141px;font-size:10.4px;line-height:15px;color:#333;font-weight:bold;letter-spacing:-0.23px;">Auto Sync</div>
<div class="t" style="left:804.9px;top:141px;font-size:10.4px;line-height:15px;color:#333;font-weight:bold;letter-spacing:-0.03px;">Last Updated</div>
<div class="t" style="left:913.2px;top:141px;font-size:10.4px;line-height:15px;color:#333;font-weight:bold;letter-spacing:-0.08px;">Last Updated By</div>
<div class="t" style="left:1021.2px;top:141px;font-size:10.4px;line-height:15px;color:#333;font-weight:bold;letter-spacing:0.10px;">Origin</div>
<div class="t" style="left:59.2px;top:164px;font-size:11px;line-height:15px;color:#555;letter-spacing:-0.14px;"><u>Default Enterprise_clone</u></div>
<div class="t" style="left:221.4px;top:166px;font-size:11px;line-height:15px;color:#555;letter-spacing:-0.23px;">Enterprise Wi-Fi</div>
<div class="t" style="left:329.4px;top:164px;font-size:11px;line-height:15px;color:#555;"><span style="color:#3a9a78">0</span> of 0 offline</div>
<div class="t" style="left:437.4px;top:166px;font-size:11px;line-height:15px;color:#555;letter-spacing:-0.20px;">Base Infrastructure</div>
<div class="t" style="left:588.6px;top:164px;font-size:11px;line-height:15px;color:#555;letter-spacing:-0.15px;"><u>Default Enterprise</u></div>
<div class="t" style="left:697px;top:164px;font-size:11px;line-height:15px;color:#555;letter-spacing:-0.55px;">ON</div>
<div class="t" style="left:804.9px;top:166px;font-size:11px;line-height:15px;color:#555;letter-spacing:-0.05px;">29 Jan 2026, 03:2...</div>
<div class="t" style="left:1021.2px;top:166px;font-size:11px;line-height:15px;color:#555;letter-spacing:-0.32px;">Custom</div>
<div class="t" style="left:59.2px;top:190px;font-size:11px;line-height:15px;color:#555;letter-spacing:-0.20px;"><u>Default Enterprise NBI</u></div>
<div class="t" style="left:221.4px;top:191px;font-size:11px;line-height:15px;color:#555;letter-spacing:-0.23px;">Enterprise Wi-Fi</div>
<div class="t" style="left:329.4px;top:190px;font-size:11px;line-height:15px;color:#555;"><span style="color:#3a9a78">0</span> of 0 offline</div>
<div class="t" style="left:437.4px;top:191px;font-size:11px;line-height:15px;color:#555;letter-spacing:-0.20px;">Base Infrastructure</div>
<div class="t" style="left:588.6px;top:190px;font-size:11px;line-height:15px;color:#555;letter-spacing:-0.15px;"><u>Default Enterprise</u></div>
<div class="t" style="left:697px;top:190px;font-size:11px;line-height:15px;color:#555;letter-spacing:-0.55px;">ON</div>
<div class="t" style="left:804.9px;top:191px;font-size:11px;line-height:15px;color:#555;letter-spacing:-0.32px;">16 Dec 2025, 10:43...</div>
<div class="t" style="left:1021.2px;top:191px;font-size:11px;line-height:15px;color:#555;letter-spacing:-0.32px;">Custom</div>
<div class="t" style="left:59.2px;top:215px;font-size:11px;line-height:15px;color:#555;letter-spacing:-0.38px;"><u>Durga_Rv22_Default_14_11</u></div>
<div class="t" style="left:221.4px;top:216px;font-size:11px;line-height:15px;color:#555;letter-spacing:-0.22px;">RV22 Home Mesh</div>
<div class="t" style="left:329.4px;top:215px;font-size:11px;line-height:15px;color:#555;"><span style="color:#3a9a78">0</span> of 0 offline</div>
<div class="t" style="left:437.4px;top:216px;font-size:11px;line-height:15px;color:#555;letter-spacing:-0.20px;">Base Infrastructure</div>
<div class="t" style="left:697px;top:215px;font-size:11px;line-height:15px;color:#555;letter-spacing:-0.47px;">OFF</div>
<div class="t" style="left:804.9px;top:216px;font-size:11px;line-height:15px;color:#555;letter-spacing:-0.18px;">29 Nov 2025, 10:3...</div>
<div class="t" style="left:1021.2px;top:216px;font-size:11px;line-height:15px;color:#555;letter-spacing:-0.32px;">Custom</div>
<div class="t" style="left:59.2px;top:240px;font-size:11px;line-height:15px;color:#555;letter-spacing:-0.19px;"><u>Default RV22 Home Mesh</u></div>
<div class="t" style="left:221.4px;top:242px;font-size:11px;line-height:15px;color:#555;letter-spacing:-0.22px;">RV22 Home Mesh</div>
<div class="t" style="left:329.4px;top:240px;font-size:11px;line-height:15px;color:#555;"><span style="color:#3a9a78">0</span> of 0 offline</div>
<div class="t" style="left:437.4px;top:242px;font-size:11px;line-height:15px;color:#555;letter-spacing:-0.20px;">Base Infrastructure</div>
<div class="t" style="left:588.6px;top:240px;font-size:11px;line-height:15px;color:#555;letter-spacing:-0.25px;"><u>Default RV22 Hom...</u></div>
<div class="t" style="left:697px;top:240px;font-size:11px;line-height:15px;color:#555;letter-spacing:-0.55px;">ON</div>
<div class="t" style="left:804.9px;top:242px;font-size:11px;line-height:15px;color:#555;letter-spacing:-0.07px;">25 Sep 2025, 04:5...</div>
<div class="t" style="left:1021.2px;top:242px;font-size:11px;line-height:15px;color:#555;letter-spacing:-0.32px;">Custom</div>
<div class="t" style="left:59.2px;top:265px;font-size:11px;line-height:15px;color:#555;letter-spacing:-0.17px;"><u>Default Enterprise</u></div>
<div class="t" style="left:221.4px;top:267px;font-size:11px;line-height:15px;color:#555;letter-spacing:-0.23px;">Enterprise Wi-Fi</div>
<div class="t" style="left:328.5px;top:265px;font-size:11px;line-height:15px;color:#555;letter-spacing:-.15px;"><span style="color:#d0213f;letter-spacing:-1.950px">1</span> of <span style="letter-spacing:-1.950px">1</span> offline</div>
<div class="t" style="left:437.4px;top:267px;font-size:11px;line-height:15px;color:#555;letter-spacing:-0.20px;">Base Infrastructure</div>
<div class="t" style="left:588.6px;top:265px;font-size:11px;line-height:15px;color:#555;letter-spacing:-0.15px;"><u>Default Enterprise</u></div>
<div class="t" style="left:697px;top:265px;font-size:11px;line-height:15px;color:#555;letter-spacing:-0.55px;">ON</div>
<div class="t" style="left:804.9px;top:267px;font-size:11px;line-height:15px;color:#555;letter-spacing:-0.01px;">22 Aug 2025, 05:2...</div>
<div class="t" style="left:1021.2px;top:267px;font-size:11px;line-height:15px;color:#555;letter-spacing:-0.32px;">Custom</div>
<div class="t" style="left:1000.6px;top:192px;font-size:9px;line-height:13px;color:#555;">...</div>
<div class="t" style="left:964.5px;top:296px;font-size:9.6px;line-height:13px;color:#555;transform:scaleX(0.935);transform-origin:0 50%;">Showing 1 - 5 Total: 5</div>
<div class="t" style="left:1063.3px;top:296px;font-size:9.6px;line-height:13px;color:#555;transform:scaleX(0.887);transform-origin:0 50%;">100</div>
<div class="t" style="left:1123.5px;top:296px;font-size:9.8px;line-height:14px;color:#c2c2c2;transform:scaleX(0.910);transform-origin:0 50%;">Previous</div>
<div class="t" style="left:1172.8px;top:297px;font-size:9.3px;line-height:13px;color:#fff;font-weight:bold;">1</div>
<div class="t" style="left:1192px;top:296px;font-size:9.8px;line-height:14px;color:#c2c2c2;transform:scaleX(0.943);transform-origin:0 50%;">Next</div>
<div class="t" style="left:375.9px;top:512px;font-size:9.8px;line-height:14px;color:#555;transform:scaleX(0.936);transform-origin:0 50%;">Copyright © 2015 - 2026 Cambium Networks, Ltd. All rights reserved.</div>
<div class="t" style="left:669.8px;top:512px;font-size:9.8px;line-height:14px;color:#555;transform:scaleX(0.944);transform-origin:0 50%;">Version 6.0.0-b20</div>
<div class="t" style="left:754.5px;top:512px;font-size:9.8px;line-height:14px;color:#555;transform:scaleX(0.939);transform-origin:0 50%;"><u>Community</u></div>
<div class="t" style="left:812.9px;top:512px;font-size:9.8px;line-height:14px;color:#555;transform:scaleX(0.947);transform-origin:0 50%;"><u>Support</u></div>
<div class="t" style="left:857.3px;top:512px;font-size:9.8px;line-height:14px;color:#555;transform:scaleX(0.967);transform-origin:0 50%;"><u>Help</u></div>
</div>
</body>
</html>
